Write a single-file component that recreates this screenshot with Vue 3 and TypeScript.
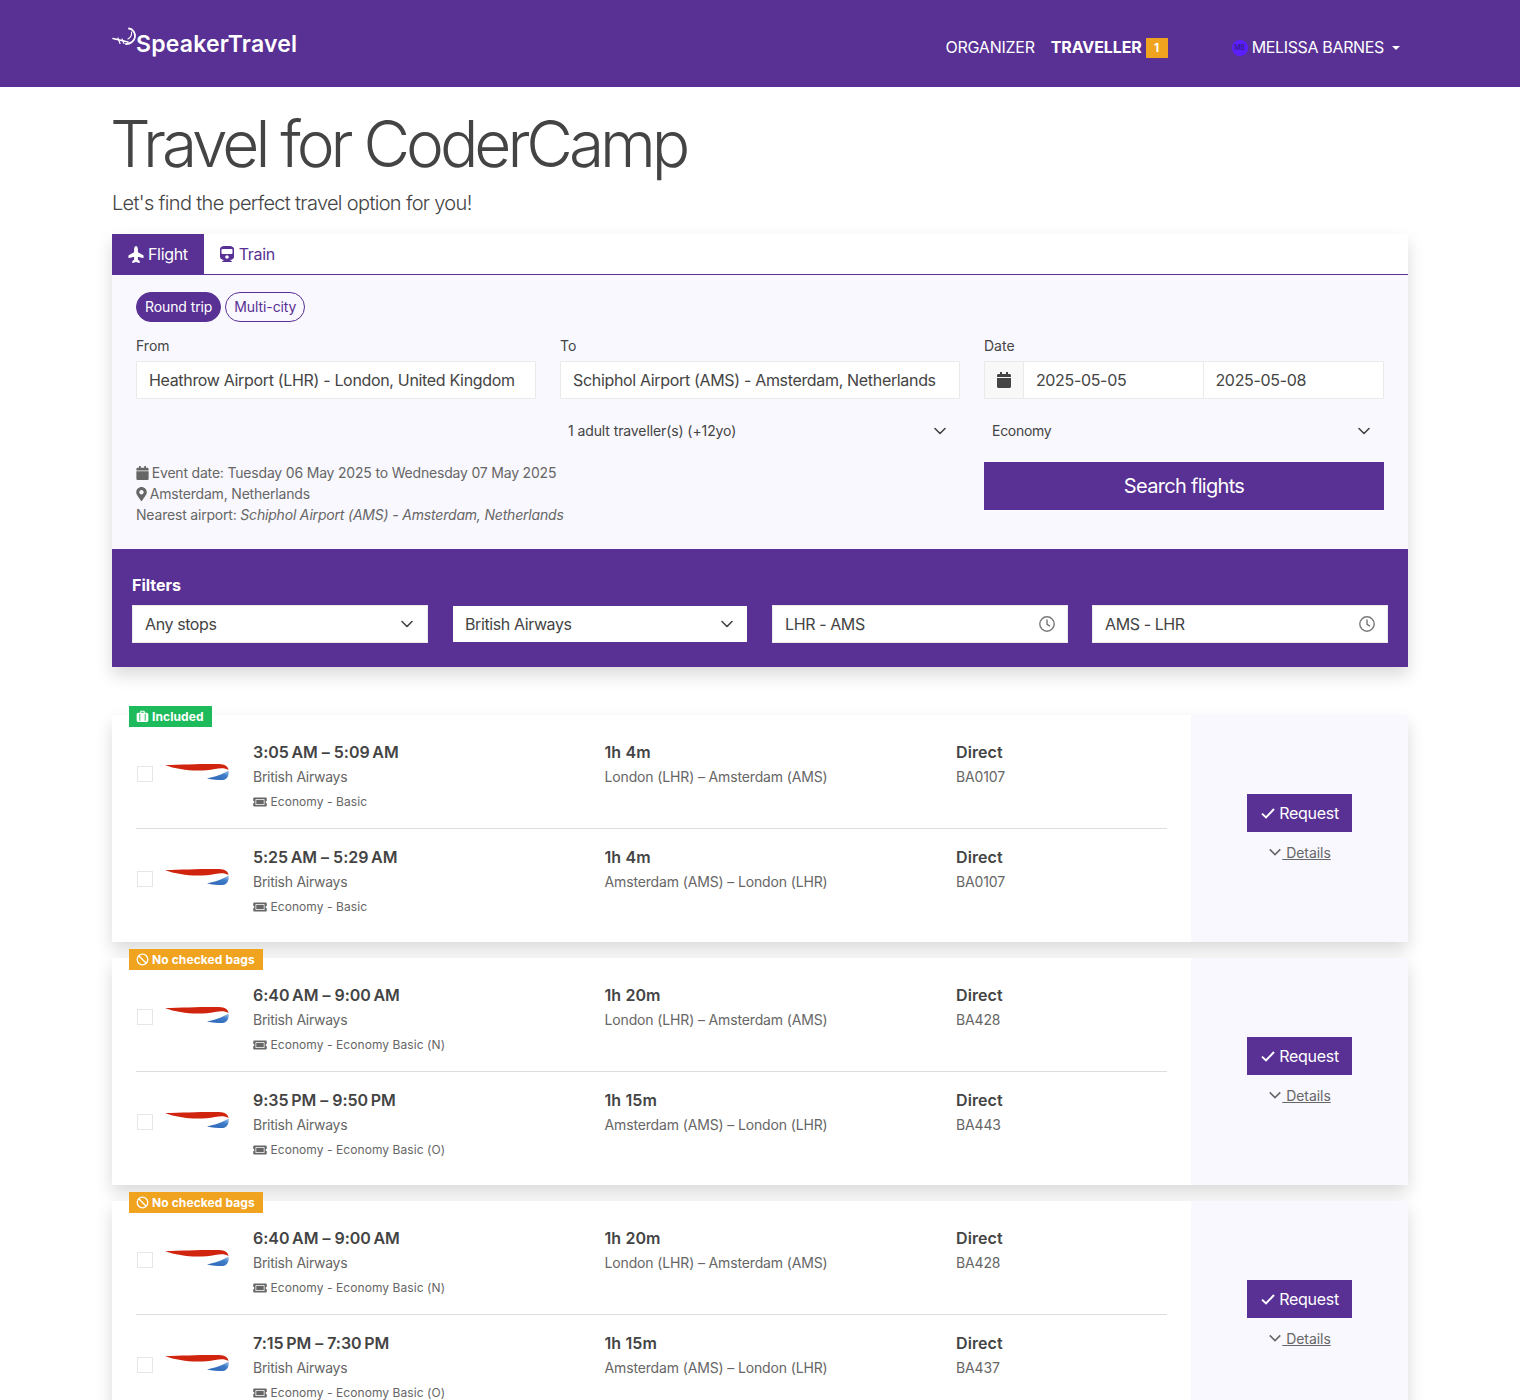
<template>
  <div class="page">
    <header class="topbar">
      <div class="container topbar-inner">
        <a class="brand">
          <svg class="brand-mark" viewBox="0 0 25 20" width="25" height="20" aria-hidden="true">
            <path d="M17 1.5 C21 2 23.5 6 23 10 C22.5 14 18.5 17 14 17" fill="none" stroke="#fff" stroke-width="1.8" stroke-linecap="round" />
            <path d="M19.5 5 C20 8 18.5 10.5 16 12" fill="none" stroke="#fff" stroke-width="1.1" stroke-linecap="round" />
            <path d="M1 11.5 L16 15" fill="none" stroke="#fff" stroke-width="1.6" stroke-linecap="round" />
            <path d="M6 11 L8 16.5 M10 12 L12 16.5" fill="none" stroke="#fff" stroke-width="1.2" stroke-linecap="round" />
          </svg>
          <span>SpeakerTravel</span>
        </a>
        <nav class="nav">
          <span class="nav-link nav-org">ORGANIZER</span>
          <span class="nav-link nav-link--active">TRAVELLER</span>
          <span class="nav-badge">1</span>
          <span class="avatar">MB</span>
          <span class="nav-link nav-user">MELISSA BARNES</span>
          <span class="caret"></span>
        </nav>
      </div>
    </header>

    <main class="container">
      <h1 class="title">Travel for CoderCamp</h1>
      <p class="lead">Let's find the perfect travel option for you!</p>

      <section class="search-card">
        <div class="tabs">
          <button class="tab tab--active">
            <svg class="tab-icon plane" viewBox="0 0 512 576"><path :d="icons.plane" transform="rotate(-90) translate(-576 0)" /></svg>Flight
          </button>
          <button class="tab">
            <svg class="tab-icon" viewBox="0 0 448 512"><path :d="icons.train" /></svg>Train
          </button>
        </div>

        <div class="search-body">
          <div class="pills">
            <span class="pill pill--active">Round trip</span>
            <span class="pill">Multi-city</span>
          </div>

          <div class="search-grid">
            <div>
              <label class="field-label">From</label>
              <div class="input">Heathrow Airport (LHR) - London, United Kingdom</div>
            </div>
            <div>
              <label class="field-label">To</label>
              <div class="input">Schiphol Airport (AMS) - Amsterdam, Netherlands</div>
            </div>
            <div>
              <label class="field-label">Date</label>
              <div class="date-group">
                <span class="date-addon">
                  <svg viewBox="0 0 448 512" width="14" height="16"><path :d="icons.calendar" fill="#444" /></svg>
                </span>
                <span class="date-value">2025-05-05</span>
                <span class="date-value">2025-05-08</span>
              </div>
            </div>

            <div class="select-row select-row--second">
              <span>1 adult traveller(s) (+12yo)</span>
              <svg class="chevron" viewBox="0 0 16 16" width="16" height="16"><path d="M3 5.5 L8 10.5 L13 5.5" /></svg>
            </div>
            <div class="select-row">
              <span class="select-economy">Economy</span>
              <svg class="chevron" viewBox="0 0 16 16" width="16" height="16"><path d="M3 5.5 L8 10.5 L13 5.5" /></svg>
            </div>

            <div class="event-info">
              <div>
                <svg class="info-icon" viewBox="0 0 448 512" width="13" height="14"><path :d="icons.calendar" /></svg>
                Event date: Tuesday 06 May 2025 to Wednesday 07 May 2025
              </div>
              <div>
                <svg class="info-icon" viewBox="0 0 384 512" width="11" height="14"><path :d="icons.marker" /></svg>
                Amsterdam, Netherlands
              </div>
              <div>Nearest airport: <em>Schiphol Airport (AMS) - Amsterdam, Netherlands</em></div>
            </div>
            <button class="search-btn">Search flights</button>
          </div>
        </div>

        <div class="filters">
          <div class="filters-title">Filters</div>
          <div class="filters-row">
            <div v-for="f in filters" :key="f.label" :class="['filter', f.inset && 'filter--inset']">
              <span>{{ f.label }}</span>
              <svg v-if="f.kind === 'select'" class="chevron" viewBox="0 0 16 16" width="16" height="16"><path d="M3 5.5 L8 10.5 L13 5.5" /></svg>
              <svg v-else class="clock" viewBox="0 0 16 16" width="16" height="16">
                <circle cx="8" cy="8" r="7.2" />
                <path d="M8 3.6 V8.4 L11 10.2" />
              </svg>
            </div>
          </div>
        </div>
      </section>

      <div class="results">
        <article v-for="(r, i) in results" :key="i" class="result">
          <span :class="['bag', r.included ? 'bag--ok' : 'bag--warn']">
            <svg v-if="r.included" viewBox="0 0 14 14" width="13" height="13">
              <path d="M4.5 3 V1.8 C4.5 1.2 5 .8 5.5 .8 H8.5 C9 .8 9.5 1.2 9.5 1.8 V3 H11.5 C12.6 3 13.3 3.8 13.3 4.8 V11 C13.3 12 12.6 12.8 11.5 12.8 H2.5 C1.4 12.8 .7 12 .7 11 V4.8 C.7 3.8 1.4 3 2.5 3 Z M5.6 3 H8.4 V1.9 H5.6 Z M3.6 4.2 V11.6 H4.6 V4.2 Z M9.4 4.2 V11.6 H10.4 V4.2 Z" fill="#fff" fill-rule="evenodd" />
            </svg>
            <svg v-else viewBox="0 0 14 14" width="13" height="13">
              <circle cx="7" cy="7" r="5.7" fill="none" stroke="#fff" stroke-width="1.4" />
              <path d="M3 3 L11 11" stroke="#fff" stroke-width="1.4" />
            </svg>
            {{ r.included ? 'Included' : 'No checked bags' }}
          </span>

          <div class="legs">
            <div v-for="(leg, j) in r.legs" :key="j" class="leg">
              <div class="leg-brand">
                <span class="check"></span>
                <svg class="ba-logo" viewBox="0 0 64 20" width="64" height="20" aria-hidden="true">
                  <defs>
                    <linearGradient :id="`ba-${i}-${j}`" x1="0" y1="1" x2="1" y2="0">
                      <stop offset="0" stop-color="#2a62b4" />
                      <stop offset=".65" stop-color="#3f7cc8" />
                      <stop offset="1" stop-color="#a9c8ea" />
                    </linearGradient>
                  </defs>
                  <path d="M0 3 C18 2.6 40 1.6 54 2 C60 2.2 63 4.5 63.5 8 C60 6 56 6 50 7 C34 10 14 8.5 0 3 Z" fill="#d0240f" />
                  <path d="M42 16.5 C50 15 58 12 63.5 8.5 C64.5 13 62 17.5 58 18 C53 18 47 17.5 42 16.5 Z" :fill="`url(#ba-${i}-${j})`" />
                </svg>
              </div>
              <div>
                <div class="leg-title leg-title--time">{{ leg.time }}</div>
                <div class="leg-sub leg-sub--airline">British Airways</div>
                <div class="leg-small">
                  <svg viewBox="0 0 576 512" width="14" height="12"><path :d="icons.ticket" /></svg>
                  {{ leg.fare }}
                </div>
              </div>
              <div>
                <div class="leg-title">{{ leg.duration }}</div>
                <div class="leg-sub">{{ leg.route }}</div>
              </div>
              <div>
                <div class="leg-title">Direct</div>
                <div class="leg-sub">{{ leg.code }}</div>
              </div>
            </div>
          </div>

          <aside class="actions">
            <button class="request-btn">
              <svg viewBox="0 0 16 16" width="16" height="16"><path d="M2 8.6 L6 12.4 L14 4" /></svg>
              Request
            </button>
            <a class="details">
              <svg viewBox="0 0 16 16" width="14" height="14"><path d="M2 5 L8 11 L14 5" /></svg>
              <span>&nbsp;Details</span>
            </a>
          </aside>
        </article>
      </div>
    </main>
  </div>
</template>

<script setup lang="ts">
interface Leg {
  time: string;
  fare: string;
  duration: string;
  route: string;
  code: string;
}

const icons = {
  plane:
    'M480 192H365.71L260.61 8.06A16.014 16.014 0 0 0 246.71 0h-65.5c-10.63 0-18.3 10.17-15.38 20.39L214.86 192H112l-43.2-57.6c-3.02-4.03-7.77-6.4-12.8-6.4H16.01C5.6 128-2.04 137.78.49 147.88L32 256 .49 364.12C-2.04 374.22 5.6 384 16.01 384H56c5.04 0 9.78-2.37 12.8-6.4L112 320h102.86l-49.03 171.6c-2.92 10.22 4.75 20.4 15.38 20.4h65.5c5.74 0 11.04-3.08 13.89-8.06L365.71 320H480c35.35 0 96-28.65 96-64s-60.65-64-96-64z',
  train:
    'M448 96v256c0 51.815-61.624 96-130.022 96l62.98 49.721C386.905 502.417 383.562 512 376 512H72c-7.578 0-10.892-9.594-4.957-14.279L130.022 448C61.82 448 0 403.954 0 352V96C0 42.981 64 0 128 0h192c65 0 128 42.981 128 96zm-48 136V120c0-13.255-10.745-24-24-24H72c-13.255 0-24 10.745-24 24v112c0 13.255 10.745 24 24 24h304c13.255 0 24-10.745 24-24zm-176 64c-30.928 0-56 25.072-56 56s25.072 56 56 56 56-25.072 56-56-25.072-56-56-56z',
  calendar:
    'M12 192h424c6.6 0 12 5.4 12 12v260c0 26.5-21.5 48-48 48H48c-26.5 0-48-21.5-48-48V204c0-6.6 5.4-12 12-12zm436-44v-36c0-26.5-21.5-48-48-48h-48V12c0-6.6-5.4-12-12-12h-40c-6.6 0-12 5.4-12 12v52H160V12c0-6.6-5.4-12-12-12h-40c-6.6 0-12 5.4-12 12v52H48C21.5 64 0 85.5 0 112v36c0 6.6 5.4 12 12 12h424c6.6 0 12-5.4 12-12z',
  marker:
    'M172.268 501.67C26.97 291.031 0 269.413 0 192 0 85.961 85.961 0 192 0s192 85.961 192 192c0 77.413-26.97 99.031-172.268 309.67-9.535 13.774-29.93 13.773-39.464 0zM192 272c44.183 0 80-35.817 80-80s-35.817-80-80-80-80 35.817-80 80 35.817 80 80 80z',
  ticket:
    'M128 160h320v192H128V160zm400 96c0 26.51 21.49 48 48 48v96c0 26.51-21.49 48-48 48H48c-26.51 0-48-21.49-48-48v-96c26.51 0 48-21.49 48-48s-21.49-48-48-48v-96c0-26.51 21.49-48 48-48h480c26.51 0 48 21.49 48 48v96c-26.51 0-48 21.49-48 48zm-48-104c0-13.255-10.745-24-24-24H120c-13.255 0-24 10.745-24 24v208c0 13.255 10.745 24 24 24h336c13.255 0 24-10.745 24-24V152z',
};

const filters = [
  { label: 'Any stops', kind: 'select', inset: false },
  { label: 'British Airways', kind: 'select', inset: true },
  { label: 'LHR - AMS', kind: 'time', inset: false },
  { label: 'AMS - LHR', kind: 'time', inset: false },
];

const OUT = 'London (LHR) – Amsterdam (AMS)';
const BACK = 'Amsterdam (AMS) – London (LHR)';

const results: { included: boolean; legs: Leg[] }[] = [
  {
    included: true,
    legs: [
      { time: '3:05\u202fAM – 5:09\u202fAM', fare: 'Economy - Basic', duration: '1h 4m', route: OUT, code: 'BA0107' },
      { time: '5:25\u202fAM – 5:29\u202fAM', fare: 'Economy - Basic', duration: '1h 4m', route: BACK, code: 'BA0107' },
    ],
  },
  {
    included: false,
    legs: [
      { time: '6:40\u202fAM – 9:00\u202fAM', fare: 'Economy - Economy Basic (N)', duration: '1h 20m', route: OUT, code: 'BA428' },
      { time: '9:35\u202fPM – 9:50\u202fPM', fare: 'Economy - Economy Basic (O)', duration: '1h 15m', route: BACK, code: 'BA443' },
    ],
  },
  {
    included: false,
    legs: [
      { time: '6:40\u202fAM – 9:00\u202fAM', fare: 'Economy - Economy Basic (N)', duration: '1h 20m', route: OUT, code: 'BA428' },
      { time: '7:15\u202fPM – 7:30\u202fPM', fare: 'Economy - Economy Basic (O)', duration: '1h 15m', route: BACK, code: 'BA437' },
    ],
  },
];
</script>

<style>
html,
body {
  margin: 0;
  background: #fff;
}
</style>

<style scoped>
.page {
  height: 1400px;
  overflow: hidden;
  background: #fff;
  color: #444;
  font-family: Inter, 'Liberation Sans', sans-serif;
  font-size: 16px;
  line-height: 24px;
}
.container {
  width: 1296px;
  margin: 0 auto;
}

/* top bar */
.topbar {
  height: 87px;
  background: #593094;
  color: #fff;
}
.topbar-inner {
  display: flex;
  justify-content: space-between;
  height: 87px;
}
.brand {
  display: flex;
  align-items: flex-start;
  padding-top: 27px;
  font-weight: 600;
  font-size: 23px;
  line-height: 34px;
  letter-spacing: 0.2px;
}
.brand-mark {
  margin-right: -1px;
}
.nav {
  display: flex;
  align-items: center;
  height: 20px;
  margin-top: 38px;
  padding-right: 8px;
}
.nav-link {
  margin-right: 16px;
  margin-bottom: 2px;
  font-size: 16px;
  font-weight: 400;
}
.nav-org {
  letter-spacing: -0.25px;
}
.nav-link--active {
  margin-right: 4px;
  font-weight: 700;
  letter-spacing: -0.1px;
}
.nav-badge {
  width: 22px;
  height: 20px;
  background: #f0a31f;
  font-size: 12px;
  font-weight: 700;
  line-height: 20px;
  text-align: center;
}
.avatar {
  width: 16px;
  height: 16px;
  margin-left: 64px;
  border-radius: 50%;
  background: #5b1fff;
  color: #2a1a66;
  font-size: 7px;
  line-height: 16px;
  text-align: center;
}
.nav-user {
  margin-left: 4px;
  margin-right: 8px;
  letter-spacing: -0.35px;
}
.caret {
  width: 0;
  height: 0;
  border-top: 4px solid #fff;
  border-left: 4px solid transparent;
  border-right: 4px solid transparent;
}

/* heading */
.title {
  margin: 0 0 0 -2px;
  padding-top: 18px;
  font-size: 64px;
  font-weight: 300;
  line-height: 77px;
  letter-spacing: -4.05px;
}
.lead {
  margin: 6px 0 0;
  font-size: 20px;
  line-height: 30px;
  font-weight: 300;
  letter-spacing: -0.67px;
}

/* search card */
.search-card {
  margin-top: 16px;
  box-shadow: 0 8px 16px rgba(0, 0, 0, 0.15);
}
.tabs {
  display: flex;
  height: 41px;
  box-sizing: border-box;
  border-bottom: 1px solid #593094;
  background: #fff;
}
.tab {
  display: flex;
  align-items: center;
  height: 40px;
  padding: 0 16px;
  border: 0;
  background: transparent;
  color: #593094;
  font: inherit;
  letter-spacing: -0.33px;
}
.tab--active {
  background: #593094;
  color: #fff;
}
.tab-icon {
  width: 14px;
  height: 16px;
  margin-right: 5px;
  fill: currentColor;
}
.tab-icon.plane {
  width: 16px;
  height: 17px;
  margin-right: 4px;
}
.search-body {
  padding: 17px 24px 24px;
  background: #f9f8fe;
}
.pills {
  display: flex;
  gap: 4px;
}
.pill {
  height: 30px;
  box-sizing: border-box;
  padding: 0 8px;
  border: 1px solid #593094;
  border-radius: 15px;
  color: #593094;
  font-size: 14px;
  line-height: 28px;
  letter-spacing: -0.1px;
}
.pill--active {
  background: #593094;
  color: #fff;
}
.search-grid {
  display: grid;
  grid-template-columns: repeat(3, 400px);
  column-gap: 24px;
  row-gap: 13px;
  margin-top: 13px;
}
.field-label {
  display: block;
  margin-bottom: 4px;
  font-size: 14px;
  line-height: 22px;
}
.input,
.date-group {
  height: 38px;
  box-sizing: border-box;
  border: 1px solid #eaeaea;
  background: #fff;
  line-height: 36px;
  letter-spacing: -0.33px;
}
.input {
  padding: 0 12px;
  white-space: nowrap;
  overflow: hidden;
}
.date-group {
  display: flex;
}
.date-addon {
  display: flex;
  align-items: center;
  justify-content: center;
  width: 38px;
  border-right: 1px solid #eaeaea;
  background: #f8f8f8;
}
.date-value {
  width: 180px;
  box-sizing: border-box;
  padding: 0 12px;
}
.date-value + .date-value {
  padding-left: 11px;
  border-left: 1px solid #eaeaea;
}
.select-row {
  display: flex;
  align-items: center;
  justify-content: space-between;
  height: 38px;
  padding: 0 12px 0 8px;
  font-size: 14px;
  letter-spacing: -0.1px;
}
.select-economy {
  letter-spacing: -0.28px;
}
.select-row--second {
  grid-column: 2;
}
.chevron {
  fill: none;
  stroke: #444;
  stroke-width: 1.6;
  stroke-linecap: round;
  stroke-linejoin: round;
}
.event-info {
  grid-column: 1 / span 2;
  margin-top: -1px;
  font-size: 14px;
  line-height: 21px;
  letter-spacing: -0.19px;
  color: #666;
}
.info-icon {
  margin-right: -1px;
  fill: #666;
  vertical-align: -2px;
}
.search-btn {
  height: 48px;
  margin-top: -1px;
  border: 0;
  background: #593094;
  color: #fff;
  font: inherit;
  font-size: 20px;
  letter-spacing: -0.7px;
}

/* filters */
.filters {
  padding: 24px 20px;
  background: #593094;
  color: #fff;
}
.filters-title {
  font-weight: 700;
  line-height: 24px;
}
.filters-row {
  display: grid;
  grid-template-columns: repeat(4, 296px);
  column-gap: 24px;
  margin-top: 8px;
}
.filter {
  display: flex;
  align-items: center;
  justify-content: space-between;
  height: 38px;
  box-sizing: border-box;
  padding: 0 12px;
  border: 1px solid #eaeaea;
  background: #fff;
  color: #444;
  letter-spacing: -0.4px;
}
.filter--inset {
  border-color: #593094;
}
.clock {
  fill: none;
  stroke: #777;
  stroke-width: 1.4;
}

/* results */
.results {
  display: flex;
  flex-direction: column;
  gap: 16px;
  margin-top: 48px;
}
.result {
  position: relative;
  display: flex;
  box-shadow: 0 8px 16px rgba(0, 0, 0, 0.15);
  background: #fff;
}
.bag {
  position: absolute;
  top: -9px;
  left: 17px;
  display: flex;
  align-items: center;
  gap: 3px;
  height: 21px;
  padding: 0 8px 0 7px;
  color: #fff;
  font-size: 12px;
  font-weight: 700;
  letter-spacing: 0.1px;
}
.bag--ok {
  background: #1dbb5b;
}
.bag--warn {
  background: #f0a31f;
}
.legs {
  flex: 1;
  padding: 9px 24px;
}
.leg {
  display: grid;
  grid-template-columns: 117px 351.5px 351.5px 1fr;
  padding: 16px 0 14px;
}
.leg + .leg {
  border-top: 1px solid #ddd;
}
.leg-brand {
  display: flex;
  align-items: center;
  margin-bottom: 7px;
}
.check {
  width: 16px;
  height: 16px;
  box-sizing: border-box;
  margin-left: 1px;
  border: 1px solid #e6e6e6;
  background: #fff;
}
.ba-logo {
  margin-left: 12px;
  margin-bottom: 3px;
}
.leg-title {
  font-weight: 600;
  line-height: 25px;
  letter-spacing: 0.1px;
}
.leg-title--time {
  letter-spacing: -0.02px;
}
.leg-sub {
  font-size: 14px;
  line-height: 24px;
  letter-spacing: -0.14px;
  color: #666;
}
.leg-sub--airline {
  letter-spacing: -0.28px;
}
.leg-small {
  padding-top: 1px;
  font-size: 12px;
  line-height: 24px;
  letter-spacing: 0.07px;
  color: #666;
}
.leg-small svg {
  fill: #666;
  vertical-align: -2px;
}
.actions {
  display: flex;
  flex-direction: column;
  align-items: center;
  justify-content: center;
  width: 217px;
  background: #f9f8fe;
}
.request-btn {
  display: flex;
  align-items: center;
  gap: 3px;
  height: 38px;
  padding: 0 13px;
  border: 0;
  background: #593094;
  color: #fff;
  font: inherit;
  letter-spacing: -0.28px;
}
.request-btn svg {
  fill: none;
  stroke: #fff;
  stroke-width: 2;
}
.details {
  display: flex;
  align-items: center;
  margin-top: 10px;
  margin-bottom: 1px;
  font-size: 14px;
  line-height: 21px;
  color: #666;
  letter-spacing: -0.05px;
}
.details span {
  text-decoration: underline;
}
.details svg {
  fill: none;
  stroke: #666;
  stroke-width: 1.8;
}
</style>
